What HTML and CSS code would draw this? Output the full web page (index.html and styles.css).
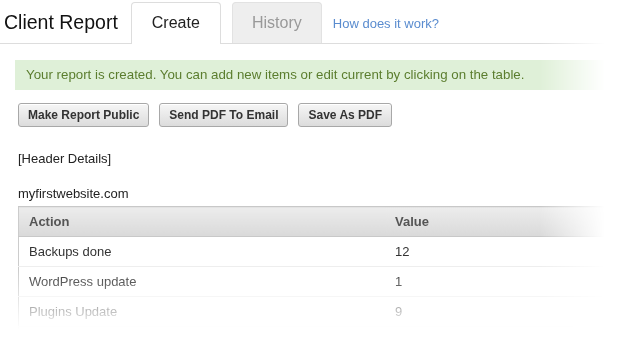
FILE: index.html
```html
<!DOCTYPE html>
<html lang="en">
<head>
    <meta charset="UTF-8">
    <meta name="viewport" content="width=device-width, initial-scale=1.0">
    <title>Client Report</title>
    <link rel="stylesheet" href="styles.css">
</head>
<body>
<div class="page">
    <header class="top">
        <h1>Client Report</h1>
        <nav class="tabs">
            <a class="tab active" href="#">Create</a>
            <a class="tab" href="#">History</a>
            <a class="help" href="#">How does it work?</a>
        </nav>
    </header>

    <div class="content">
        <div class="alert">Your report is created. You can add new items or edit current by clicking on the table.</div>

        <div class="actions">
            <button class="btn">Make Report Public</button>
            <button class="btn">Send PDF To Email</button>
            <button class="btn">Save As PDF</button>
        </div>

        <p class="details">[Header Details]</p>
        <p class="site">myfirstwebsite.com</p>

        <table class="report">
            <thead>
                <tr>
                    <th class="col-action">Action</th>
                    <th>Value</th>
                </tr>
            </thead>
            <tbody>
                <tr><td>Backups done</td><td>12</td></tr>
                <tr><td>WordPress update</td><td>1</td></tr>
                <tr><td>Plugins Update</td><td>9</td></tr>
                <tr><td>Themes Update</td><td>3</td></tr>
            </tbody>
        </table>
    </div>
</div>
</body>
</html>
```

FILE: styles.css
```css
body {
    margin: 0;
    padding: 0;
    background: #fff;
    color: #333;
    font-family: "Liberation Sans", Arial, sans-serif;
    overflow: hidden;
}

/* the screenshot fades out to the right and at the bottom */
.page {
    height: 358px;
    overflow: hidden;
    -webkit-mask-image: linear-gradient(to right, #000 540px, transparent 605px), linear-gradient(to bottom, #000 270px, transparent 330px);
    -webkit-mask-composite: source-in;
    mask-image: linear-gradient(to right, #000 540px, transparent 605px), linear-gradient(to bottom, #000 270px, transparent 330px);
    mask-composite: intersect;
}

.top {
    display: flex;
    align-items: flex-end;
    height: 43px;
    border-bottom: 1px solid #ddd;
}

h1 {
    margin: 0 13px 0 4px;
    align-self: center;
    font-size: 19.5px;
    font-weight: normal;
    color: #111;
    padding-top: 1px;
}

.tabs {
    display: flex;
    align-items: flex-end;
    gap: 11px;
}

.tab {
    display: block;
    width: 88px;
    height: 40px;
    line-height: 40px;
    text-align: center;
    font-size: 16px;
    text-decoration: none;
    color: #999;
    background: #eee;
    border: 1px solid #e2e2e2;
    border-bottom: none;
    border-radius: 4px 4px 0 0;
}

.tab.active {
    color: #222;
    background: #fff;
    border-color: #ddd;
    height: 41px;
    margin-bottom: -1px;
}

.help {
    align-self: center;
    margin-top: 1px;
    font-size: 13px;
    color: #5a8ccf;
    text-decoration: none;
}

.content {
    padding: 16px 0 0 18px;
}

.alert {
    margin-left: -3px;
    padding: 8px 11px;
    font-size: 13.3px;
    line-height: 14px;
    color: #5b7d2e;
    background: #dff0d8;
}

.actions {
    display: flex;
    gap: 10px;
    margin-top: 13px;
}

.btn {
    height: 24px;
    padding: 0 9px;
    font-family: "Liberation Sans", Arial, sans-serif;
    font-size: 12px;
    font-weight: bold;
    color: #333;
    background: linear-gradient(#f6f6f6, #dcdcdc);
    border: 1px solid #a8a8a8;
    border-radius: 3px;
    box-shadow: inset 0 1px 0 #fff;
}

.details,
.site {
    margin: 0;
    font-size: 13px;
    color: #222;
}

.details {
    margin-top: 24px;
}

.site {
    margin-top: 20px;
}

.report {
    width: 600px;
    margin-top: 5px;
    border-collapse: collapse;
    font-size: 13px;
    border-left: 1px solid #ccc;
}

.report th {
    height: 29px;
    padding: 0 10px;
    text-align: left;
    color: #555;
    background: linear-gradient(#ececec, #d9d9d9);
    border-top: 1px solid #c8c8c8;
    border-bottom: 1px solid #c8c8c8;
}

.report .col-action {
    width: 346px;
}

.report td {
    height: 29px;
    padding: 0 10px;
    border-bottom: 1px solid #eee;
}
```
